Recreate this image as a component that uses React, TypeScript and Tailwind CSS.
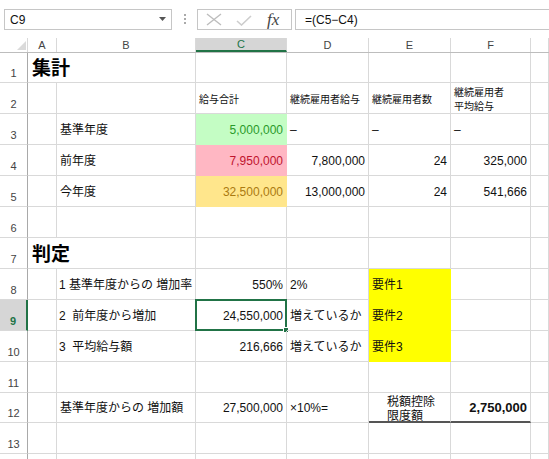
import type { ReactNode } from 'react';

const FONT = "font-['Liberation_Sans','Noto_Sans_CJK_JP',sans-serif]";

// column widths A..F, then the rest
const COLS = ['w-[29px]', 'w-[139px]', 'w-[91px]', 'w-[82px]', 'w-[82px]', 'w-[80px]', 'flex-1'];
const LETTERS = ['A', 'B', 'C', 'D', 'E', 'F', ''];

type Cell = {
    text?: ReactNode;
    right?: boolean;
    w?: string;
    v?: string; // vertical placement
    sz?: string; // font size + leading
    pl?: string;
    bg?: string; // background + border colours
    selected?: boolean;
};

function GridRow({ n, h, cells, active }: { n?: number; h: string; cells: Cell[]; active?: boolean }) {
    return (
        <div className={`flex ${h}`}>
            <div
                className={`w-[28px] shrink-0 flex items-end justify-center pb-[1px] text-[11px] border-b border-[#d9d9d9] ${
                    active
                        ? 'bg-[#d6d6d6] text-[#217346] font-bold border-r-2 border-r-[#217346]'
                        : 'text-[#444] border-r border-r-[#a9a9a9]'
                }`}
            >
                {n}
            </div>
            {cells.map((c, i) => (
                <div
                    key={i}
                    className={`relative shrink-0 flex pr-[3px] whitespace-pre overflow-visible border-r border-b ${
                        c.right ? 'justify-end' : ''
                    } ${c.w ?? COLS[i]} ${c.v ?? 'items-end pb-[6px]'} ${c.sz ?? 'text-[12px] leading-[15px]'} ${
                        c.pl ?? 'pl-[3px]'
                    } ${c.bg ?? 'border-[#d9d9d9]'}`}
                >
                    {c.text}
                    {c.selected && (
                        <>
                            <div className="absolute -left-[1px] -top-[1px] -right-[1px] -bottom-[1px] border-2 border-[#217346]" />
                            <div className="absolute -right-[3px] -bottom-[3px] w-[6px] h-[6px] bg-[#217346] border border-white" />
                        </>
                    )}
                </div>
            ))}
        </div>
    );
}

const empty = (k: number): Cell[] => Array.from({ length: k }, () => ({}));

const titleRow = (t: string): Cell[] => [
    { text: t, w: 'w-[168px]', sz: 'text-[19px] leading-[24px] font-bold text-black', v: 'items-end pb-[1px]', pl: 'pl-[4px]' },
    { w: COLS[2] },
    { w: COLS[3] },
    { w: COLS[4] },
    { w: COLS[5] },
    { w: COLS[6] },
];

export default function App() {
    const hdr = { v: 'items-center pt-[3px]', sz: 'text-[10px] leading-[14px]' };
    const yellow = 'bg-[#ffff00] border-[#ffff00]';

    return (
        <div className={`w-[549px] h-[459px] overflow-hidden bg-white text-[#111] ${FONT}`}>
            {/* formula bar */}
            <div className="h-[38px] flex items-start pt-[9px]">
                <div className="ml-[4px] w-[168px] h-[21px] border border-[#c6c6c6] flex items-center pl-[5px] text-[12px] relative">
                    C9
                    <svg className="absolute right-[5px] top-[7px]" width="7" height="4" viewBox="0 0 7 4">
                        <path d="M0 0h7L3.5 4z" fill="#555" />
                    </svg>
                </div>
                <div className="ml-[12px] mt-[5px] flex flex-col gap-[2px]">
                    <div className="w-[2px] h-[2px] bg-[#aaa]" />
                    <div className="w-[2px] h-[2px] bg-[#aaa]" />
                    <div className="w-[2px] h-[2px] bg-[#aaa]" />
                </div>
                <div className="ml-[11px] w-[95px] h-[21px] border border-[#c6c6c6] flex items-center pl-[8px]">
                    <svg width="16" height="13" viewBox="0 0 16 13">
                        <path d="M1 1l14 11M15 1L1 12" stroke="#bdbdbd" strokeWidth="1.4" fill="none" />
                    </svg>
                    <svg className="ml-[14px] mt-[2px]" width="16" height="11" viewBox="0 0 16 11">
                        <path d="M1 6l4.5 4L15 1" stroke="#cdcdcd" strokeWidth="1.6" fill="none" />
                    </svg>
                    <span className="ml-[15px] font-['Liberation_Serif',serif] italic text-[17px] text-[#444] leading-none">fx</span>
                </div>
                <div className="ml-[3px] flex-1 h-[21px] border border-r-0 border-[#c6c6c6] flex items-center pl-[9px] text-[12px]">
                    =(C5−C4)
                </div>
            </div>

            {/* column headers */}
            <div className="flex h-[15px] border-b border-[#bdbdbd]">
                <div className="w-[28px] shrink-0 border-r border-[#d9d9d9] relative">
                    <svg className="absolute left-[17px] top-[3px]" width="9" height="9" viewBox="0 0 9 9">
                        <path d="M9 0v9H0z" fill="#dadada" />
                    </svg>
                </div>
                {LETTERS.map((l, i) => (
                    <div
                        key={i}
                        className={`shrink-0 flex items-center justify-center text-[11px] ${COLS[i]} ${
                            l === 'C'
                                ? 'bg-[#d6d6d6] text-[#217346] border-b-2 border-[#217346] border-r border-r-[#d9d9d9]'
                                : 'text-[#444] border-r border-[#d9d9d9]'
                        }`}
                    >
                        {l}
                    </div>
                ))}
            </div>

            <GridRow n={1} h="h-[30px]" cells={titleRow('集計')} />
            <GridRow
                n={2}
                h="h-[31px]"
                cells={[
                    {},
                    {},
                    { text: '給与合計', ...hdr },
                    { text: '継続雇用者給与', ...hdr },
                    { text: '継続雇用者数', ...hdr },
                    { text: '継続雇用者\n平均給与', ...hdr },
                    {},
                ]}
            />
            <GridRow
                n={3}
                h="h-[31px]"
                cells={[
                    {},
                    { text: '基準年度' },
                    { text: <span className="text-[#2a9a2a]">5,000,000</span>, right: true, bg: 'bg-[#c4fdc4] border-[#c4fdc4]' },
                    { text: '–' },
                    { text: '–' },
                    { text: '–' },
                    {},
                ]}
            />
            <GridRow
                n={4}
                h="h-[31px]"
                cells={[
                    {},
                    { text: '前年度' },
                    { text: <span className="text-[#c0142e]">7,950,000</span>, right: true, bg: 'bg-[#ffb7c3] border-[#ffb7c3]' },
                    { text: '7,800,000', right: true },
                    { text: '24', right: true },
                    { text: '325,000', right: true },
                    {},
                ]}
            />
            <GridRow
                n={5}
                h="h-[31px]"
                cells={[
                    {},
                    { text: '今年度' },
                    { text: <span className="text-[#ab7a10]">32,500,000</span>, right: true, bg: 'bg-[#ffe68c] border-[#ffe68c]' },
                    { text: '13,000,000', right: true },
                    { text: '24', right: true },
                    { text: '541,666', right: true },
                    {},
                ]}
            />
            <GridRow n={6} h="h-[31px]" cells={empty(7)} />
            <GridRow n={7} h="h-[31px]" cells={titleRow('判定')} />
            <GridRow
                n={8}
                h="h-[31px]"
                cells={[
                    {},
                    { text: '1 基準年度からの 増加率', pl: 'pl-[2px]' },
                    { text: '550%', right: true },
                    { text: '2%' },
                    { text: '要件1', bg: yellow },
                    {},
                    {},
                ]}
            />
            <GridRow
                n={9}
                h="h-[31px]"
                active
                cells={[
                    {},
                    { text: '2  前年度から増加', pl: 'pl-[2px]' },
                    { text: '24,550,000', right: true, selected: true },
                    { text: '増えているか' },
                    { text: '要件2', bg: yellow },
                    {},
                    {},
                ]}
            />
            <GridRow
                n={10}
                h="h-[31px]"
                cells={[
                    {},
                    { text: '3  平均給与額', pl: 'pl-[2px]' },
                    { text: '216,666', right: true },
                    { text: '増えているか' },
                    { text: '要件3', bg: yellow },
                    {},
                    {},
                ]}
            />
            <GridRow n={11} h="h-[31px]" cells={empty(7)} />
            <GridRow
                n={12}
                h="h-[30px]"
                cells={[
                    {},
                    { text: '基準年度からの 増加額' },
                    { text: '27,500,000', right: true },
                    { text: '×10%=' },
                    {
                        text: '税額控除\n限度額',
                        v: 'items-start pt-[2px]',
                        sz: 'text-[12px] leading-[14px]',
                        pl: 'pl-[18px]',
                        bg: 'border-r-[#d9d9d9] border-b-2 border-b-[#555]',
                    },
                    {
                        text: '2,750,000',
                        right: true,
                        v: 'items-center',
                        sz: 'text-[13px] leading-[15px] font-bold',
                        bg: 'border-r-[#d9d9d9] border-b-2 border-b-[#555]',
                    },
                    {},
                ]}
            />
            <GridRow n={13} h="h-[31px]" cells={empty(7)} />
            <GridRow h="h-[31px]" cells={empty(7)} />
        </div>
    );
}
